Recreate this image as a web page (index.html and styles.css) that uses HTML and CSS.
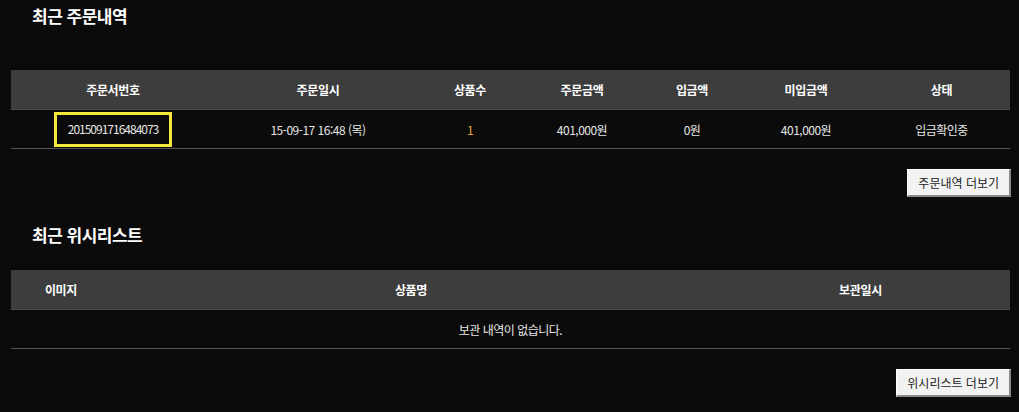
FILE: index.html
```html
<!DOCTYPE html>
<html lang="ko">
<head>
    <meta charset="UTF-8">
    <meta name="viewport" content="width=device-width, initial-scale=1.0">
    <title>마이페이지</title>
    <link rel="stylesheet" href="styles.css">
</head>
<body>

    <section class="box">
        <h2 class="box-title">최근 주문내역</h2>
        <table class="list orders">
            <thead>
                <tr>
                    <th>주문서번호</th>
                    <th>주문일시</th>
                    <th>상품수</th>
                    <th>주문금액</th>
                    <th>입금액</th>
                    <th>미입금액</th>
                    <th>상태</th>
                </tr>
            </thead>
            <tbody>
                <tr>
                    <td><span class="order-no">2015091716484073</span></td>
                    <td>15-09-17 16:48 (목)</td>
                    <td class="qty">1</td>
                    <td>401,000원</td>
                    <td>0원</td>
                    <td>401,000원</td>
                    <td>입금확인중</td>
                </tr>
            </tbody>
        </table>
        <div class="more">
            <button type="button">주문내역 더보기</button>
        </div>
    </section>

    <section class="box">
        <h2 class="box-title second">최근 위시리스트</h2>
        <table class="list wish">
            <thead>
                <tr>
                    <th>이미지</th>
                    <th>상품명</th>
                    <th>보관일시</th>
                </tr>
            </thead>
            <tbody>
                <tr>
                    <td colspan="3">보관 내역이 없습니다.</td>
                </tr>
            </tbody>
        </table>
        <div class="more">
            <button type="button">위시리스트 더보기</button>
        </div>
    </section>

</body>
</html>
```

FILE: styles.css
```css
body {
    font-family: "Noto Sans CJK KR", "Noto Sans", sans-serif;
    font-size: 12px;
    background-color: #0b0b0b;
    color: #e6e6e6;
    margin: 0;
    padding: 0;
}

.box {
    width: 999px;
    margin-left: 11px;
}

.box-title {
    margin: 0;
    padding: 3px 0 0 21px;
    height: 67px;
    font-size: 17px;
    line-height: 26px;
    font-weight: bold;
    letter-spacing: -0.5px;
    color: #fff;
}

.box-title.second {
    padding-top: 25px;
    height: 48px;
}

.list {
    width: 100%;
    border-collapse: collapse;
    table-layout: fixed;
}

.list th {
    height: 39px;
    padding: 0;
    background-color: #3d3d3d;
    border-bottom: 1px solid #4d4d4d;
    color: #fff;
    font-weight: bold;
    letter-spacing: -0.3px;
    text-align: center;
}

.list td {
    height: 38px;
    padding: 0;
    border-bottom: 1px solid #555;
    letter-spacing: -0.5px;
    text-align: center;
}

.orders th:nth-child(1) { width: 204px; }
.orders th:nth-child(2) { width: 206px; }
.orders th:nth-child(3) { width: 98px; }
.orders th:nth-child(4) { width: 126px; }
.orders th:nth-child(5) { width: 94px; }
.orders th:nth-child(6) { width: 134px; }

.wish th:nth-child(1) { width: 100px; }
.wish th:nth-child(2) { width: 600px; }

.order-no {
    display: inline-block;
    padding: 6px 11px 7px;
    border: 3px solid #f3e83b;
    line-height: 16px;
    letter-spacing: -1px;
}

.qty {
    color: #e0a63a;
}

.more {
    display: flex;
    justify-content: flex-end;
    margin-right: -1px;
    padding-top: 20px;
}

.more button {
    height: 28px;
    padding: 0 10px;
    font-family: inherit;
    font-size: 12px;
    color: #222;
    background-color: #f2f2f2;
    border: 1px solid;
    border-color: #fff #8a8a8a #8a8a8a #fff;
    border-width: 1px 2px 2px 1px;
    cursor: pointer;
}
```
